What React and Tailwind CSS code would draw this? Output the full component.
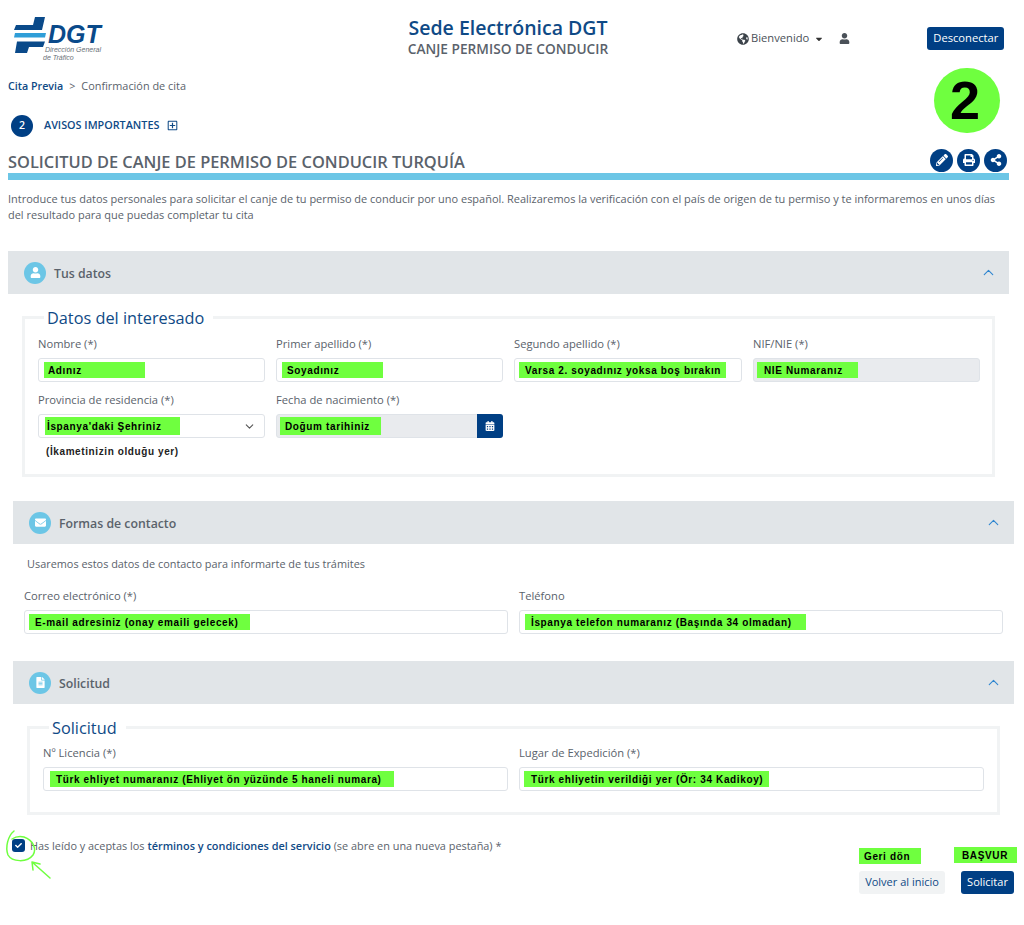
import React from "react";
import { FaPencilAlt, FaPrint, FaShareAlt, FaUser, FaEnvelope, FaFileAlt, FaCalendarAlt, FaGlobeAmericas, FaCheck, FaRegPlusSquare, FaCaretDown } from "react-icons/fa";
import { ChevronUp, ChevronDown } from "lucide-react";

function Hl({ w, pl = "pl-[5px]", children, h = "h-[16px]" }) {
  return (
    <span className={`flex items-center bg-[#6fff3f] text-black text-[10px] font-bold tracking-[0.63px] whitespace-nowrap font-['Liberation_Sans',sans-serif] ${h} ${pl} ${w}`}>
      {children}
    </span>
  );
}

function Field({ label, box = "w-full", grey, hlw, hlpl, hlh, offset = "pl-[5px]", children, right }) {
  return (
    <div className={box}>
      <div className="text-[11.2px] leading-[16px] text-[#5a626b] mb-[6px] whitespace-nowrap">{label}</div>
      <div className={`flex items-center justify-between h-[24px] border border-[#dfe3e8] rounded-[3px] ${offset} ${grey ? "bg-[#e9ebee]" : "bg-white"}`}>
        <Hl w={hlw} pl={hlpl} h={hlh}>{children}</Hl>
        {right}
      </div>
    </div>
  );
}

function SectionHead({ icon, title, cls }) {
  return (
    <div className={`flex items-center h-[43px] bg-[#e1e5e8] pl-[16px] pr-[12px] ${cls}`}>
      <div className="flex items-center justify-center w-[22px] h-[22px] rounded-full bg-[#6cc6e6] text-white text-[11px]">{icon}</div>
      <div className="ml-[8px] mt-[3px] text-[12.3px] font-semibold text-[#5a626b]">{title}</div>
      <ChevronUp className="ml-auto text-[#2f86d0]" size={17} strokeWidth={1.6} />
    </div>
  );
}

function RoundBtn({ children }) {
  return <div className="flex items-center justify-center w-[23px] h-[23px] rounded-full bg-[#003f84] text-white text-[12px]">{children}</div>;
}

function Logo() {
  return (
    <div className="flex flex-col">
      <div className="flex items-start h-[29px]">
        <svg width="34" height="37" viewBox="0 0 34 37" className="shrink-0">
          <polygon points="21,0 31,0 28,13 0,13 2,8 19,8" fill="#0a4a8a" />
          <polygon points="1,16 32,16 31,20.5 0,20.5" fill="#2f9ed8" />
          <polygon points="3,24.5 31,24.5 29,30 15,30 13,36 1,36" fill="#0a4a8a" />
        </svg>
        <span className="mt-[5px] text-[25px] leading-[24px] font-bold italic text-[#0a4a8a] font-['Liberation_Sans',sans-serif]">DGT</span>
      </div>
      <div className="pl-[29px] text-[7px] leading-[8px] italic text-[#6a7178] font-['Liberation_Sans',sans-serif] whitespace-nowrap">
        <div className="pl-[2px]">Dirección General</div>
        <div>de Tráfico</div>
      </div>
    </div>
  );
}

export default function App() {
  return (
    <div className="relative w-[1024px] h-[925px] overflow-hidden bg-white font-['Open_Sans',sans-serif] text-[#5a626b]">
      {/* header */}
      <header className="flex items-start h-[78px]">
        <div className="w-[400px] pl-[14px] pt-[17px]"><Logo /></div>
        <div className="w-[216px] pt-[16px] text-center">
          <div className="text-[19.5px] leading-[24px] font-semibold text-[#0f4a86] whitespace-nowrap">Sede Electrónica DGT</div>
          <div className="text-[13.7px] leading-[17px] font-semibold text-[#5a626b] whitespace-nowrap">CANJE PERMISO DE CONDUCIR</div>
        </div>
        <div className="flex items-center pt-[27px] pl-[121px] h-[50px]">
          <FaGlobeAmericas className="text-[12px] text-[#3c434a]" />
          <span className="ml-[2px] text-[11.2px] text-[#4a5158]">Bienvenido</span>
          <FaCaretDown className="ml-[5px] text-[10px] text-[#333]" />
          <FaUser className="ml-[15px] text-[11px] text-[#4a5158]" />
          <div className="flex items-center justify-center ml-[77px] w-[77px] h-[23px] rounded-[3px] bg-[#003f84] text-white text-[11.2px]">Desconectar</div>
        </div>
      </header>

      {/* breadcrumb */}
      <div className="flex items-center h-[16px] pl-[8px] text-[10.7px] leading-[16px]">
        <span className="font-semibold text-[#0f4a86]">Cita Previa</span>
        <span className="ml-[6px] text-[#5a626b]">&gt;</span>
        <span className="ml-[6px] text-[10.9px] text-[#5a626b]">Confirmación de cita</span>
      </div>

      {/* avisos */}
      <div className="flex items-center h-[22px] mt-[21px] pl-[11px]">
        <div className="flex items-center justify-center w-[22px] h-[22px] rounded-full bg-[#003f84] text-white text-[10.5px] font-semibold">2</div>
        <span className="ml-[11px] -mt-[2px] text-[10.8px] font-semibold text-[#0f4a86]">AVISOS IMPORTANTES</span>
        <FaRegPlusSquare className="ml-[8px] -mt-[2px] text-[11px] text-[#0f4a86]" />
      </div>

      {/* title */}
      <div className="flex items-center justify-between h-[24px] mt-[11px] pl-[8px] pr-[17px]">
        <h1 className="mt-[4px] text-[16.4px] font-semibold text-[#5a626b] whitespace-nowrap">SOLICITUD DE CANJE DE PERMISO DE CONDUCIR TURQUÍA</h1>
        <div className="flex gap-[4px]">
          <RoundBtn><FaPencilAlt /></RoundBtn>
          <RoundBtn><FaPrint /></RoundBtn>
          <RoundBtn><FaShareAlt /></RoundBtn>
        </div>
      </div>
      <div className="ml-[8px] w-[1001px] h-[7px] mt-[1px] bg-[#6cc6e6]" />

      <p className="pl-[8px] w-[1005px] mt-[11px] text-[10.97px] leading-[16px] text-[#5a626b]">
        Introduce tus datos personales para solicitar el canje de tu permiso de conducir por uno español. Realizaremos la verificación con el país de origen de tu permiso y te informaremos en unos días del resultado para que puedas completar tu cita
      </p>

      {/* Tus datos */}
      <SectionHead cls="ml-[8px] w-[1001px] mt-[28px]" icon={<FaUser />} title="Tus datos" />
      <fieldset className="ml-[22px] w-[973px] h-[161px] mt-[22px] border-[3px] border-t-0 border-[#f1f3f4]">
        <div className="flex items-start h-[16px]">
          <div className="w-[19px] h-[3px] bg-[#f1f3f4]" />
          <div className="-mt-[6px] px-[3px] text-[16.3px] leading-[16px] text-[#0f4a86] whitespace-nowrap">Datos del interesado</div>
          <div className="flex-1 h-[3px] ml-[6px] bg-[#f1f3f4]" />
        </div>
        <div className="flex gap-[11px] pl-[13px] mt-[4px]">
          <Field box="w-[227px]" label="Nombre (*)" hlw="w-[101px]" hlpl="pl-[4px]">Adınız</Field>
          <Field box="w-[227px]" label="Primer apellido (*)" hlw="w-[101px]">Soyadınız</Field>
          <Field box="w-[228px]" label="Segundo apellido (*)" hlw="w-[207px]" hlpl="pl-[6px]" offset="pl-[4px]">Varsa 2. soyadınız yoksa boş bırakın</Field>
          <Field box="w-[227px]" label="NIF/NIE (*)" grey hlw="w-[101px]" hlpl="pl-[7px]" offset="pl-[3px]">NIE Numaranız</Field>
        </div>
        <div className="flex gap-[11px] pl-[13px] mt-[10px]">
          <div className="w-[227px]">
            <Field label="Provincia de residencia (*)" hlw="w-[135px]" hlpl="pl-[2px]" hlh="h-[18px]" offset="pl-[6px] pr-[8px]" right={<ChevronDown size={13} className="text-[#555]" />}>İspanya'daki Şehriniz</Field>
            <div className="mt-[8px] pl-[8px] text-[10px] leading-[12px] font-bold text-[#222] tracking-[0.6px] font-['Liberation_Sans',sans-serif]">(İkametinizin olduğu yer)</div>
          </div>
          <Field box="w-[227px]" grey label="Fecha de nacimiento (*)" hlw="w-[101px]" hlh="h-[18px]" offset="pl-[3px]" right={
            <div className="flex items-center justify-center w-[26px] h-[24px] -mr-[1px] rounded-r-[3px] bg-[#003f84] text-white text-[10px]"><FaCalendarAlt /></div>
          }>Doğum tarihiniz</Field>
        </div>
      </fieldset>

      {/* Formas de contacto */}
      <SectionHead cls="ml-[13px] w-[1001px] mt-[24px]" icon={<FaEnvelope />} title="Formas de contacto" />
      <p className="pl-[27px] mt-[12px] text-[10.9px] leading-[16px] text-[#5a626b]">Usaremos estos datos de contacto para informarte de tus trámites</p>
      <div className="flex gap-[11px] pl-[24px] mt-[16px]">
        <Field box="w-[484px]" label="Correo electrónico (*)" hlw="w-[221px]" hlpl="pl-[6px]" offset="pl-[4px]">E-mail adresiniz (onay emaili gelecek)</Field>
        <Field box="w-[484px]" label="Teléfono" hlw="w-[281px]" hlpl="pl-[6px]">İspanya telefon numaranız (Başında 34 olmadan)</Field>
      </div>

      {/* Solicitud */}
      <SectionHead cls="ml-[13px] w-[1001px] mt-[27px]" icon={<FaFileAlt />} title="Solicitud" />
      <fieldset className="ml-[27px] w-[973px] h-[89px] mt-[22px] border-[3px] border-t-0 border-[#f1f3f4]">
        <div className="flex items-start h-[16px]">
          <div className="w-[19px] h-[3px] bg-[#f1f3f4]" />
          <div className="-mt-[6px] px-[3px] text-[16.3px] leading-[16px] text-[#0f4a86] whitespace-nowrap">Solicitud</div>
          <div className="flex-1 h-[3px] ml-[6px] bg-[#f1f3f4]" />
        </div>
        <div className="flex gap-[11px] pl-[13px] mt-[3px]">
          <Field box="w-[465px]" label="Nº Licencia (*)" hlw="w-[344px]" hlpl="pl-[6px]" offset="pl-[6px]">Türk ehliyet numaranız (Ehliyet ön yüzünde 5 haneli numara)</Field>
          <Field box="w-[465px]" label="Lugar de Expedición (*)" hlw="w-[245px]" hlpl="pl-[7px]" offset="pl-[4px]">Türk ehliyetin verildiği yer (Ör: 34 Kadikoy)</Field>
        </div>
      </fieldset>

      {/* footer */}
      <div className="flex items-start justify-between mt-[24px] pl-[12px] pr-[7px]">
        <div className="flex items-center h-[13px]">
          <div className="flex items-center justify-center w-[13px] h-[13px] rounded-[3px] bg-[#003f84] text-white text-[7px]"><FaCheck /></div>
          <p className="ml-[5px] text-[10.9px] leading-[16px] text-[#5a626b] whitespace-nowrap">
            Has leído y aceptas los <span className="font-semibold text-[#0f4a86]">términos y condiciones del servicio</span> (se abre en una nueva pestaña) *
          </p>
        </div>
        <div className="flex items-start mt-[9px]">
          <div className="flex flex-col items-start">
            <Hl w="w-[62px]" pl="pl-[5px]">Geri dön</Hl>
            <div className="flex items-center justify-center w-[86px] h-[23px] mt-[7px] rounded-[3px] bg-[#f1f3f4] text-[#0f4a86] text-[11px]">Volver al inicio</div>
          </div>
          <div className="flex flex-col items-end pr-[3px] ml-[9px] w-[63px] -mt-[1px]">
            <div className="-mr-[3px]"><Hl w="w-[63px]" pl="pl-[8px]">BAŞVUR</Hl></div>
            <div className="flex items-center justify-center w-[53px] h-[23px] mt-[8px] rounded-[3px] bg-[#003f84] text-white text-[11px]">Solicitar</div>
          </div>
        </div>
      </div>

      {/* overlays: hand annotations */}
      <div className="absolute left-[934px] top-[68px] flex items-center justify-center w-[66px] h-[65px] pr-[4px] rounded-full bg-[#6fff3f] text-black text-[54px] font-bold font-['Liberation_Sans',sans-serif]">2</div>
      <svg className="absolute left-[0px] top-[825px]" width="60" height="60" viewBox="0 0 60 60" fill="none" stroke="#6fff3f" strokeWidth="1.5" strokeLinecap="round">
        <path d="M14 6 C8 11 5 22 8 30 C12 37 27 38 33 30 C37 24 33 15 24 12 C20 11 15 12 12 14" />
        <path d="M50 53 L32 37 M32 37 L33 45 M32 37 L40 39" />
      </svg>
    </div>
  );
}
